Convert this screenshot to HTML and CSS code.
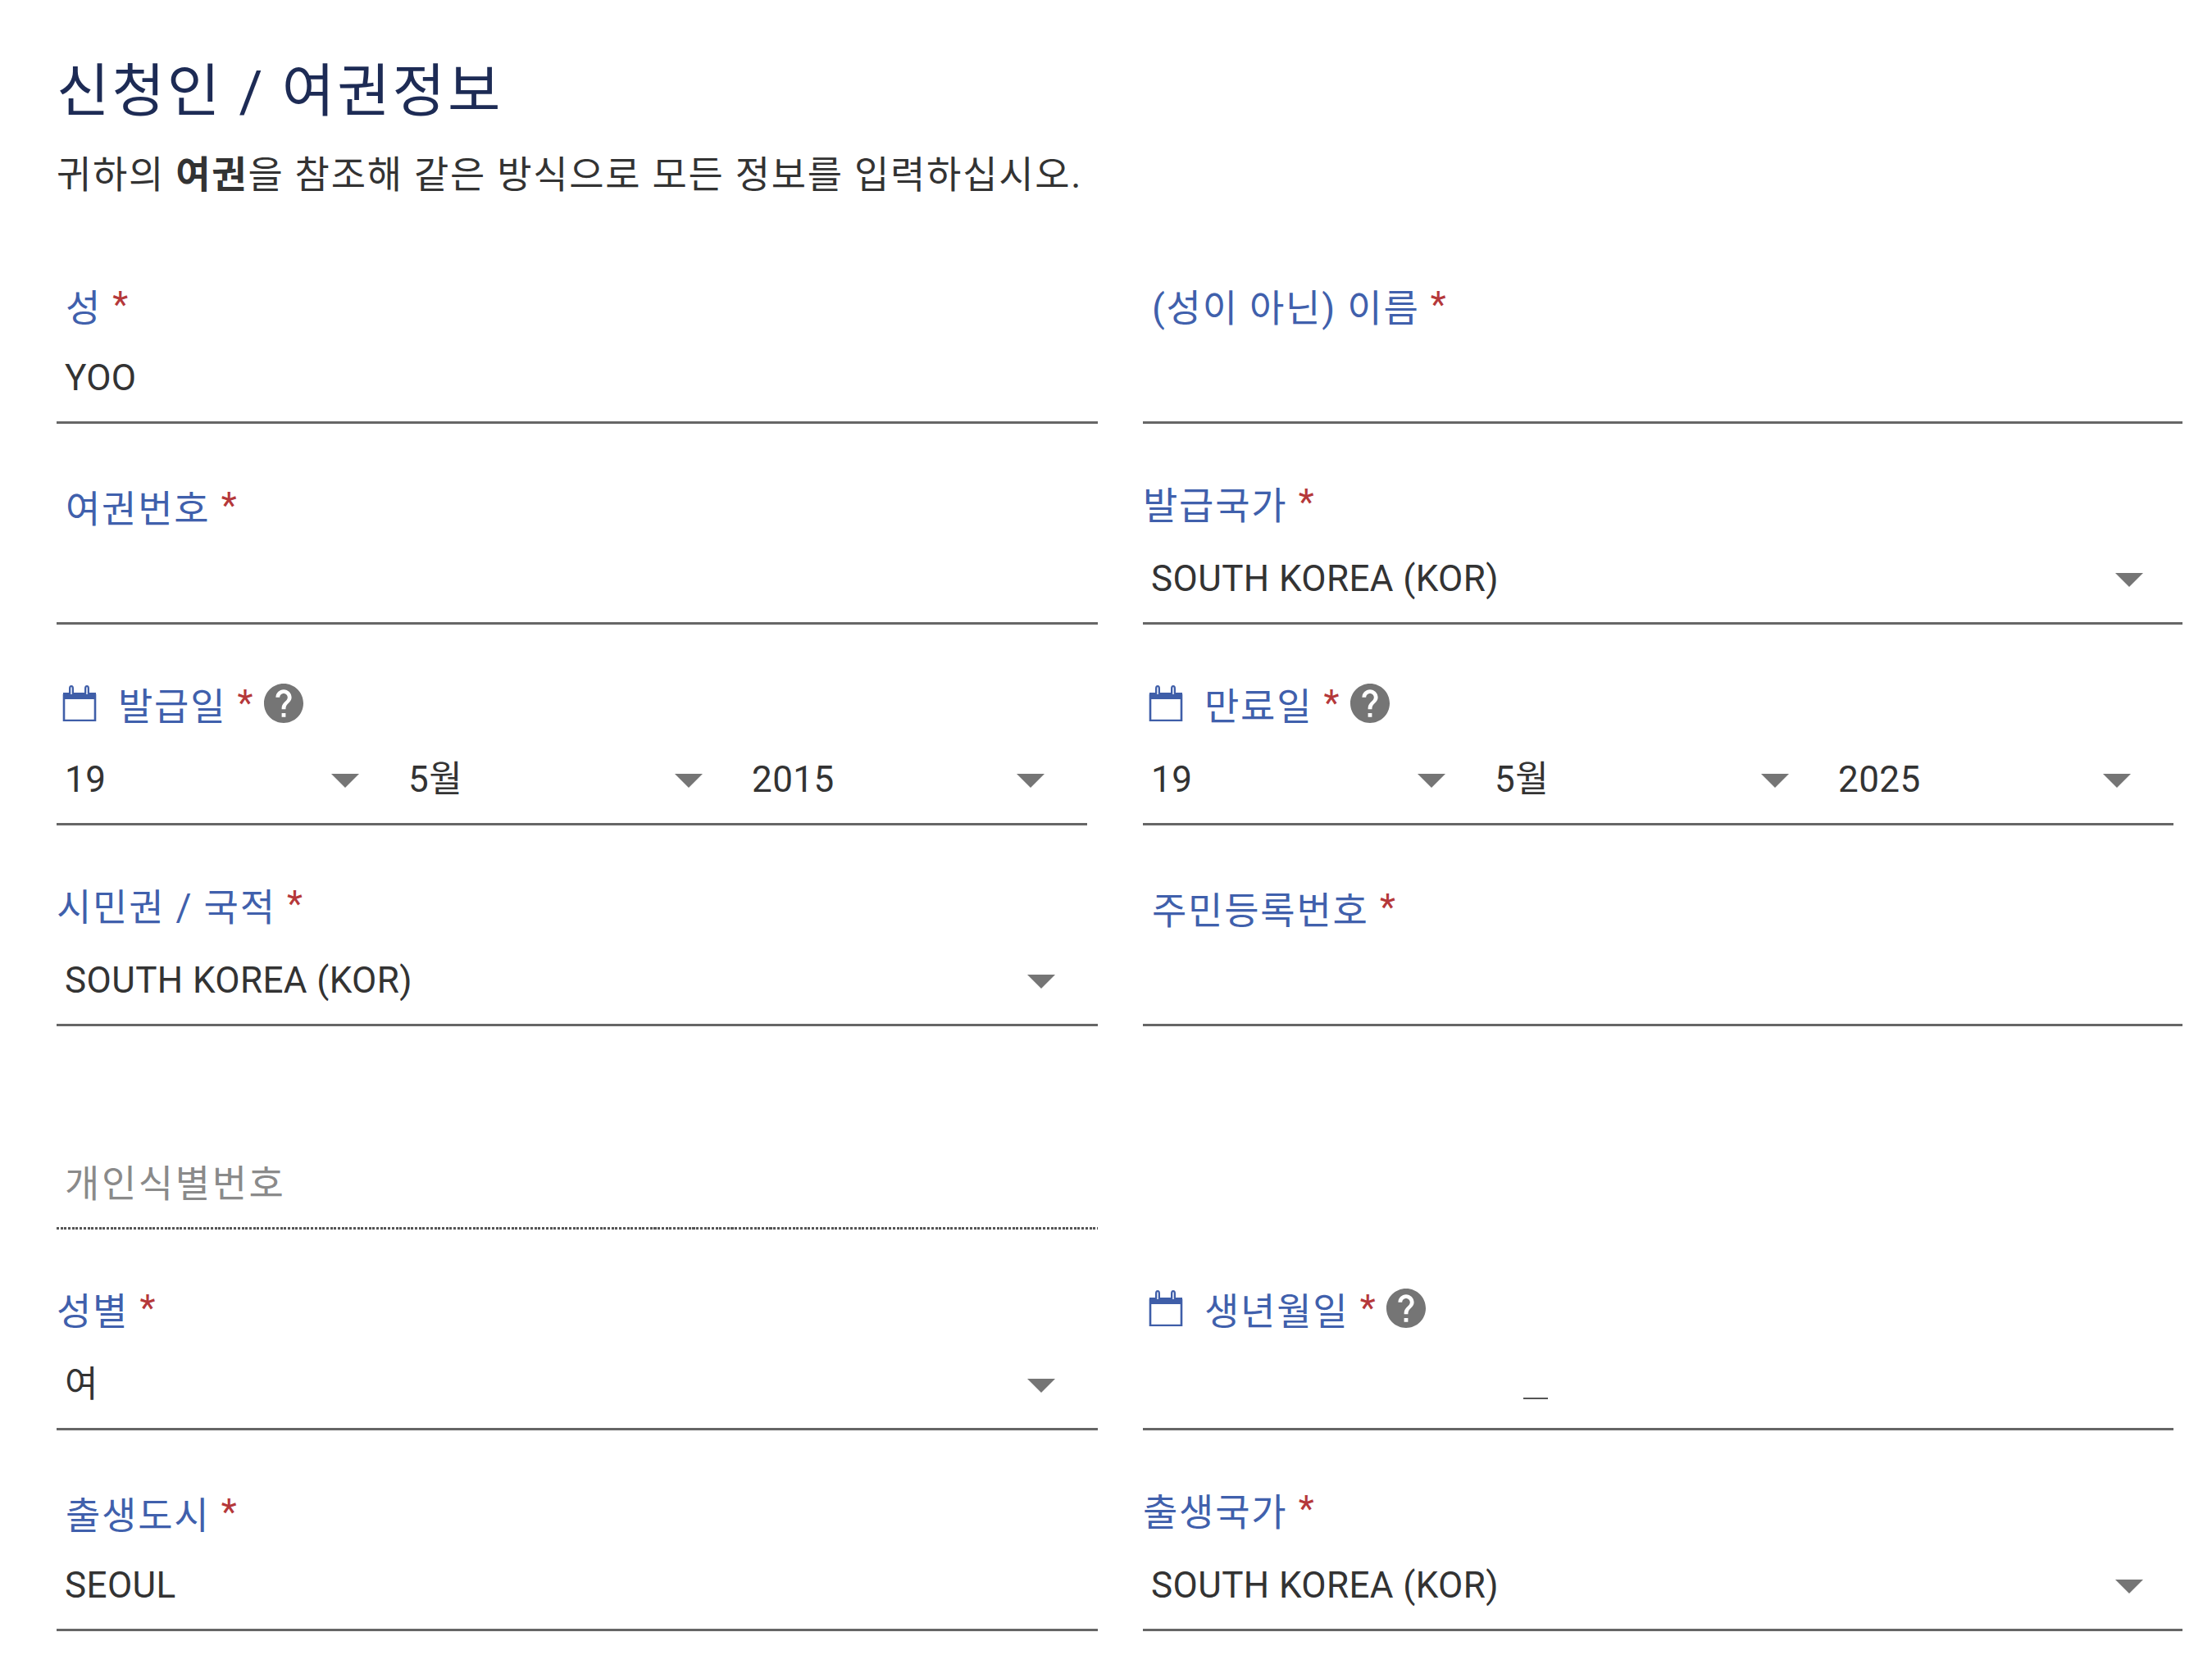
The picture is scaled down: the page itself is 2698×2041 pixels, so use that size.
FILE: index.html
```html
<!DOCTYPE html>
<html lang="ko">
<head>
<meta charset="utf-8">
<title>신청인 / 여권정보</title>
<link rel="stylesheet" href="styles.css">
</head>
<body>
<svg class="sprite" width="0" height="0" aria-hidden="true">
  <symbol id="cal" viewBox="0 0 42 44">
    <path d="M2 12h38v31H2z" fill="none" stroke="currentColor" stroke-width="2.6"/>
    <path d="M1 9h40v8H1z" fill="currentColor"/>
    <path d="M9 11V4q0-3 2-3t2 3v7M28 11V4q0-3 2-3t2 3v7" fill="#c9d3ea" stroke="currentColor" stroke-width="2"/>
  </symbol>
  <symbol id="help" viewBox="2 2 20 20">
    <path d="M12 2C6.48 2 2 6.48 2 12s4.48 10 10 10 10-4.48 10-10S17.52 2 12 2zm1 17h-2v-2h2v2zm2.07-7.75l-.9.92C13.45 12.9 13 13.5 13 15h-2v-.5c0-1.1.45-2.1 1.17-2.83l1.24-1.26c.37-.36.59-.86.59-1.41 0-1.1-.9-2-2-2s-2 .9-2 2H8c0-2.21 1.79-4 4-4s4 1.79 4 4c0 .88-.36 1.68-.93 2.25z"/>
  </symbol>
</svg>
<main class="page">
  <h1 class="title">신청인 / 여권정보</h1>
  <p class="intro">귀하의 <b>여권</b>을 참조해 같은 방식으로 모든 정보를 입력하십시오.</p>
  <div class="form">
    <div class="field"><div class="label inset">성 <i>*</i></div><div class="value">YOO</div></div>
    <div class="field"><div class="label inset">(성이 아닌) 이름 <i>*</i></div><div class="value"></div></div>

    <div class="field"><div class="label inset">여권번호 <i>*</i></div><div class="value"></div></div>
    <div class="field select"><div class="label">발급국가 <i>*</i></div><div class="value">SOUTH KOREA (KOR)<span class="caret"></span></div></div>

    <div class="field date">
      <div class="label inset"><svg class="cal"><use href="#cal"/></svg>발급일 <i>*</i><svg class="help"><use href="#help"/></svg></div>
      <div class="parts">
        <div class="value">19<span class="caret"></span></div>
        <div class="value">5월<span class="caret"></span></div>
        <div class="value">2015<span class="caret"></span></div>
      </div>
    </div>
    <div class="field date">
      <div class="label inset"><svg class="cal"><use href="#cal"/></svg>만료일 <i>*</i><svg class="help"><use href="#help"/></svg></div>
      <div class="parts">
        <div class="value">19<span class="caret"></span></div>
        <div class="value">5월<span class="caret"></span></div>
        <div class="value">2025<span class="caret"></span></div>
      </div>
    </div>

    <div class="field select"><div class="label">시민권 / 국적 <i>*</i></div><div class="value">SOUTH KOREA (KOR)<span class="caret"></span></div></div>
    <div class="field"><div class="label inset">주민등록번호 <i>*</i></div><div class="value"></div></div>

    <div class="field dotted"><div class="value placeholder">개인식별번호</div></div>
    <div class="blank"></div>

    <div class="field select"><div class="label">성별 <i>*</i></div><div class="value">여<span class="caret"></span></div></div>
    <div class="field date">
      <div class="label inset"><svg class="cal"><use href="#cal"/></svg>생년월일 <i>*</i><svg class="help"><use href="#help"/></svg></div>
      <div class="value mask"><span class="blank-mark"></span></div>
    </div>

    <div class="field"><div class="label inset">출생도시 <i>*</i></div><div class="value">SEOUL</div></div>
    <div class="field select"><div class="label">출생국가 <i>*</i></div><div class="value">SOUTH KOREA (KOR)<span class="caret"></span></div></div>
  </div>
</main>
</body>
</html>
```
FILE: styles.css
```css
* { box-sizing: border-box; }
html, body { margin: 0; padding: 0; background: #fff; }
body { font-family: Roboto, "Noto Sans CJK KR", sans-serif; color: #333; }
.sprite { position: absolute; }
.page { width: 2698px; height: 2041px; padding: 67px 36px 0 69px; overflow: hidden; }
.title {
  margin: 0; font-size: 70px; line-height: 90px; font-weight: 400; color: #1d2b55;
  letter-spacing: 3px;
}
.intro { margin: 24px 0 0; font-size: 46px; line-height: 64px; color: #333; letter-spacing: 1.73px; }
.intro b { font-weight: 700; }
.form {
  margin-top: 27px; display: grid; grid-template-columns: 1270px 1268px; column-gap: 55px;
  grid-template-rows: 245px 245px 245px 245px 248px 245px 245px;
}
.field {
  display: flex; flex-direction: column; justify-content: flex-end; border-bottom: 3px solid #666;
}
.label {
  display: flex; align-items: center; height: 60px; margin-bottom: 35px;
  font-size: 46px; color: #4060ac; white-space: pre-wrap; letter-spacing: 1.8px;
}
.label i { font-style: normal; color: #b5383a; font-size: 44px; }
.label.inset { padding-left: 11px; margin-bottom: 31px; }
.date .label.inset { margin-bottom: 35px; }
.value {
  position: relative; height: 56px; line-height: 56px; padding-left: 10px; margin-bottom: 25px;
  font-size: 44px; color: #333; letter-spacing: 0.4px;
}
.caret {
  position: absolute; right: 50px; top: 21px; width: 0; height: 0;
  border-left: 17px solid transparent; border-right: 17px solid transparent; border-top: 17px solid #757575;
}
.value:last-child .caret { right: 52px; }
.select:nth-child(even) .value .caret { right: 48px; }
.date { width: 1257px; }
.parts { display: grid; grid-template-columns: repeat(3, 1fr); }
.cal { width: 42px; height: 44px; margin-left: -4px; margin-right: 26px; color: #3f5ea8; }
.help { width: 48px; height: 48px; margin-left: 12px; fill: #757575; }
.placeholder { color: #8a8a8a; font-size: 46px; letter-spacing: 2.6px; }
.dotted {
  border-bottom: 0; padding-bottom: 3px;
  background: repeating-linear-gradient(to right, #555 0 3px, transparent 3px 4.7px) left bottom / 100% 3px no-repeat;
}
.mask .blank-mark { position: absolute; left: 464px; top: 44px; width: 30px; height: 2px; background: #555; }
```
